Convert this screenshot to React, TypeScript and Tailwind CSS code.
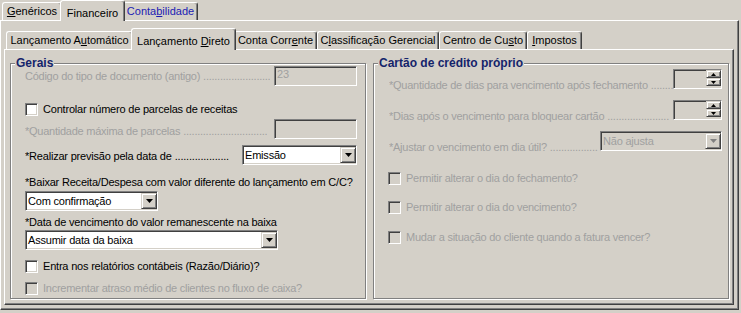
import React from "react";

const sunken =
  "border border-t-[#808080] border-l-[#808080] border-b-white border-r-white shadow-[inset_1px_1px_0_#404040,inset_-1px_-1px_0_#d4d0c8]";
const raised =
  "border border-t-[#d4d0c8] border-l-[#d4d0c8] border-b-[#404040] border-r-[#404040] shadow-[inset_1px_1px_0_#ffffff,inset_-1px_-1px_0_#808080]";
const tabBase =
  "flex justify-center border-t border-l border-r border-t-white border-l-white border-r-[#404040] rounded-t-[3px] shadow-[inset_-1px_0_0_#808080] whitespace-nowrap";
const gray = "text-[#a0a0a0] tracking-[-0.25px]";
const black = "text-black tracking-[-0.2px]";

function Tab({
  w,
  selected,
  tall,
  className = "",
  children,
}: {
  w: string;
  selected?: boolean;
  tall: string;
  className?: string;
  children: React.ReactNode;
}) {
  return (
    <div
      className={
        tabBase +
        " " +
        w +
        " " +
        (selected
          ? tall + " mb-[-1px] relative z-10 bg-[#d4d0c8] items-start pt-[3px]"
          : "h-[18px] items-center") +
        " " +
        className
      }
    >
      {children}
    </div>
  );
}

function Arrow({ gray: g = false }: { gray?: boolean }) {
  return (
    <svg width="7" height="4" viewBox="0 0 7 4">
      <polygon points="0,0 7,0 3.5,4" fill={g ? "#808080" : "#000000"} />
    </svg>
  );
}

function Check({ disabled }: { disabled?: boolean }) {
  return (
    <div
      className={
        sunken +
        " w-[13px] h-[13px] shrink-0 " +
        (disabled ? "bg-[#d4d0c8]" : "bg-white")
      }
    />
  );
}

function Select({
  w,
  value,
  disabled,
}: {
  w: string;
  value: string;
  disabled?: boolean;
}) {
  return (
    <div
      className={
        sunken +
        " " +
        w +
        " h-[20px] shrink-0 flex items-center " +
        (disabled ? "bg-[#d4d0c8] text-[#a0a0a0]" : "bg-white text-black")
      }
    >
      <span className="flex-1 pl-[2px] leading-[14px] tracking-[-0.2px] whitespace-nowrap overflow-hidden">
        {value}
      </span>
      <div className={raised + " w-[16px] h-[16px] flex items-center justify-center bg-[#d4d0c8]"}>
        <Arrow gray={disabled} />
      </div>
    </div>
  );
}

function Input({ value = "" }: { value?: string }) {
  return (
    <div
      className={
        sunken +
        " w-[83px] h-[20px] shrink-0 bg-[#d4d0c8] text-[#a0a0a0] pl-[2px] leading-[14px]"
      }
    >
      {value}
    </div>
  );
}

function Spin() {
  return (
    <div className={sunken + " w-[49px] h-[20px] shrink-0 bg-[#d4d0c8] flex justify-end"}>
      <div className="w-[15px] h-[16px] flex flex-col">
        <div className={raised + " h-[8px] flex items-center justify-center bg-[#d4d0c8]"}>
          <svg width="5" height="3" viewBox="0 0 5 3">
            <polygon points="0,3 5,3 2.5,0" fill="#000" />
          </svg>
        </div>
        <div className={raised + " h-[8px] flex items-center justify-center bg-[#d4d0c8]"}>
          <svg width="5" height="3" viewBox="0 0 5 3">
            <polygon points="0,0 5,0 2.5,3" fill="#000" />
          </svg>
        </div>
      </div>
    </div>
  );
}

function Leader({
  text,
  dots,
  disabled,
  className = "",
}: {
  text: string;
  dots: number;
  disabled?: boolean;
  className?: string;
}) {
  return (
    <div
      className={
        "flex-1 min-w-0 whitespace-nowrap leading-[14px] " +
        (disabled ? gray : black) +
        " " +
        className
      }
    >
      <div className="flex overflow-hidden">
        <span className="shrink-0">{text}</span>
        <span className="ml-[3px] min-w-0 overflow-hidden">{".".repeat(dots)}</span>
      </div>
    </div>
  );
}

function CheckRow({
  label,
  disabled,
  className = "",
}: {
  label: string;
  disabled?: boolean;
  className?: string;
}) {
  return (
    <div className={"h-[16px] flex items-center gap-[5px] " + className}>
      <Check disabled={disabled} />
      <span className={"whitespace-nowrap leading-[14px] " + (disabled ? gray : black)}>
        {label}
      </span>
    </div>
  );
}

function Group({
  title,
  className = "",
  children,
}: {
  title: string;
  className?: string;
  children: React.ReactNode;
}) {
  return (
    <div
      className={
        "relative w-[356px] h-[236px] border border-[#808080] shadow-[inset_1px_1px_0_#ffffff,1px_1px_0_#ffffff] flex flex-col " +
        className
      }
    >
      <span className="absolute top-[-8px] left-[4px] px-[1px] bg-[#d4d0c8] text-[12px] leading-[14px] font-bold text-[#14246b] whitespace-nowrap">
        {title}
      </span>
      {children}
    </div>
  );
}

export default function App() {
  return (
    <div className="w-[741px] h-[313px] bg-[#d4d0c8] text-[11px] font-['Liberation_Sans',Arial,sans-serif] text-black overflow-hidden">
      {/* top tabs */}
      <div className="h-[20px] flex items-end">
        <Tab w="w-[60px]" tall="h-[21px]" className="ml-[2px]">
          <span>
            <u>G</u>enéricos
          </span>
        </Tab>
        <Tab w="w-[65px]" tall="h-[21px]" selected className="ml-[-2px]">
          <span className="pt-[1px]">Financeiro</span>
        </Tab>
        <Tab w="w-[75px]" tall="h-[21px]" className="ml-[-2px] text-[#1c1cb4]">
          <span>
            Conta<u>b</u>ilidade
          </span>
        </Tab>
      </div>

      {/* outer panel */}
      <div className="w-[739px] h-[290px] border-t border-l border-t-white border-l-white border-r border-b border-r-[#404040] border-b-[#404040] shadow-[inset_-1px_-1px_0_#808080] pl-[3px] pt-[7px]">
        {/* inner tabs */}
        <div className="h-[21px] flex items-end">
          <Tab w="w-[127px]" tall="h-[22px]" className="ml-[2px]">
            <span>
              Lançamento A<u>u</u>tomático
            </span>
          </Tab>
          <Tab w="w-[105px]" tall="h-[22px]" selected className="ml-[-2px]">
            <span className="pt-[1px]">
              Lançamento <u>D</u>ireto
            </span>
          </Tab>
          <Tab w="w-[83px]" tall="h-[22px]" className="ml-[-2px]">
            <span>
              Conta Corr<u>e</u>nte
            </span>
          </Tab>
          <Tab w="w-[122px]" tall="h-[22px]">
            <span>
              C<u>l</u>assificação Gerencial
            </span>
          </Tab>
          <Tab w="w-[88px]" tall="h-[22px]">
            <span>
              Centro de Cu<u>s</u>to
            </span>
          </Tab>
          <Tab w="w-[55px]" tall="h-[22px]">
            <span>
              <u>I</u>mpostos
            </span>
          </Tab>
        </div>

        {/* inner panel */}
        <div className="w-[730px] h-[256px] border-t border-l border-t-white border-l-white border-r border-b border-r-[#404040] border-b-[#404040] shadow-[inset_-1px_-1px_0_#808080] flex gap-[7px] pl-[5px] pt-[13px]">
          <Group title="Gerais" className="pl-[14px] pr-[8px]">
            <div className="mt-[2px] h-[20px] flex items-center">
              <Leader text="Código do tipo de documento (antigo)" dots={24} disabled />
              <Input value="23" />
            </div>
            <CheckRow className="mt-[15px]" label="Controlar número de parcelas de receitas" />
            <div className="mt-[2px] h-[20px] flex items-center">
              <Leader text="*Quantidade máxima de parcelas" dots={30} disabled className="pt-[3px]" />
              <Input />
            </div>
            <div className="mt-[6px] h-[20px] flex items-center">
              <Leader text="*Realizar previsão pela data de " dots={19} className="pr-[9px] pt-[1px]" />
              <Select w="w-[115px]" value="Emissão" />
            </div>
            <div className={"mt-[10px] h-[14px] leading-[14px] whitespace-nowrap " + black}>
              *Baixar Receita/Despesa com valor diferente do lançamento em C/C?
            </div>
            <div className="mt-[2px] flex">
              <Select w="w-[133px]" value="Com confirmação" />
            </div>
            <div className={"mt-[4px] h-[14px] leading-[14px] whitespace-nowrap " + black}>
              *Data de vencimento do valor remanescente na baixa
            </div>
            <div className="mt-[1px] flex">
              <Select w="w-[253px]" value="Assumir data da baixa" />
            </div>
            <CheckRow className="mt-[8px]" label="Entra nos relatórios contábeis (Razão/Diário)?" />
            <CheckRow
              className="mt-[6px]"
              disabled
              label="Incrementar atraso médio de clientes no fluxo de caixa?"
            />
          </Group>

          <Group title="Cartão de crédito próprio" className="pl-[14px] pr-[6px]">
            <div className="mt-[5px] h-[20px] flex items-end">
              <Leader
                text="*Quantidade de dias para vencimento após fechamento"
                dots={8}
                disabled
                className="ml-[1px] mb-[-3px]"
              />
              <Spin />
            </div>
            <div className="mt-[11px] h-[20px] flex items-end">
              <Leader
                text="*Dias após o vencimento para bloquear cartão"
                dots={22}
                disabled
                className="ml-[1px] mb-[-3px]"
              />
              <Spin />
            </div>
            <div className="mt-[11px] h-[20px] flex items-end">
              <Leader
                text="*Ajustar o vencimento em dia útil?"
                dots={17}
                disabled
                className="ml-[1px] mb-[-3px]"
              />
              <Select w="w-[122px]" value="Não ajusta" disabled />
            </div>
            <CheckRow className="mt-[19px]" disabled label="Permitir alterar o dia do fechamento?" />
            <CheckRow className="mt-[13px]" disabled label="Permitir alterar o dia do vencimento?" />
            <CheckRow
              className="mt-[14px]"
              disabled
              label="Mudar a situação do cliente quando a fatura vencer?"
            />
          </Group>
        </div>
      </div>
    </div>
  );
}
